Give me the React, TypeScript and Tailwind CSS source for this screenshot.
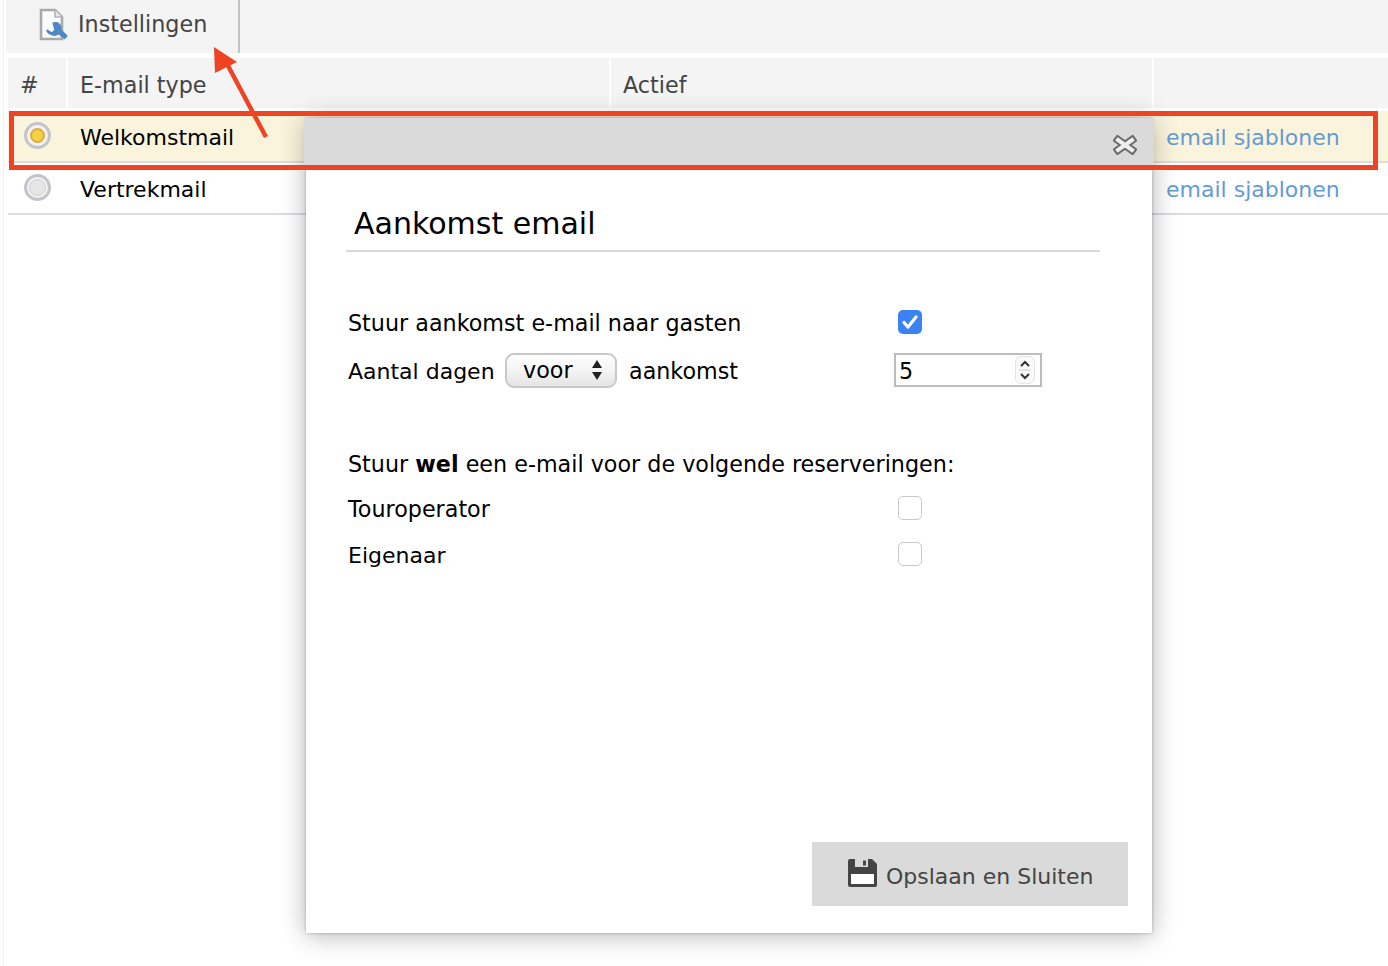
function Radio({ active }: { active?: boolean }) {
  return (
    <span className="flex h-[27px] w-[27px] items-center justify-center rounded-full border-[3px] border-[#c3c5cb] bg-[#f3f3f3]">
      <span className={active ? 'h-[15px] w-[15px] rounded-full border-2 border-[#e0a84a] bg-[#f5d33f]' : 'h-[17px] w-[17px] rounded-full border border-[#cfcfcf] bg-[#e6e6e6]'} />
    </span>
  );
}

function Row({ name, active }: { name: string; active?: boolean }) {
  return (
    <div className={`flex h-[52px] border-b-2 border-[#dcdce2] text-[22px] ${active ? 'bg-[#fbf4dc]' : 'bg-white'}`}>
      <div className="flex w-[60px] items-center pb-[2px] pl-[16px]">
        <Radio active={active} />
      </div>
      <div className="flex w-[1086px] items-center pt-[2px] pl-[12px] text-black">{name}</div>
      <div className="flex flex-1 items-center pt-[2px] pl-[12px] text-[#659ad2]">email sjablonen</div>
    </div>
  );
}

function EmptyCheck() {
  return <span className="block h-[24px] w-[24px] rounded-[5px] border border-[#c9c9c9] bg-white" />;
}

export default function App() {
  return (
    <div className="relative h-[966px] w-[1388px] overflow-hidden bg-white font-['DejaVu_Sans',sans-serif] text-[22.25px] text-[#444]">
      <div className="ml-[3px] h-[966px] border-l border-[#f1f1f1] pl-[2px]">
        <div className="flex h-[53px] bg-[#f4f4f4] pl-[33px]">
          <div className="flex w-[201px] items-center gap-[10px] border-r-2 border-[#c4c4c4] pb-[4px]">
            <svg width="29" height="34" viewBox="0 0 29 34" className="shrink-0 overflow-visible">
              <path d="M2 2h14l7 7v22H2z" fill="#fbfbfb" stroke="#a9a9a9" strokeWidth="2.600" />
              <path d="M16 2v7h7" fill="#e8e8e8" stroke="#b5b5b5" strokeWidth="1.600" />
              <path d="M8 22l5 3 3-3-2-7c3-1 6 0 7 2s1 3 1 5l6 6-2.500 2.500-6-5c-2 2-5 2-7 1s-5-2-4.500-4.500z" fill="#4f86c6" stroke="#4f86c6" strokeWidth="1.200" strokeLinejoin="round" />
            </svg>
            <span>Instellingen</span>
          </div>
        </div>
        <div className="ml-[2px] mt-[5px] flex h-[50px] gap-[2px]">
          <div className="flex w-[58px] items-center bg-[#f4f4f4] pl-[12px] pt-[6px]">#</div>
          <div className="flex w-[541px] items-center bg-[#f4f4f4] pl-[12px] pt-[6px]">E-mail type</div>
          <div className="flex w-[541px] items-center bg-[#f4f4f4] pl-[12px] pt-[6px]">Actief</div>
          <div className="flex-1 bg-[#f4f4f4]" />
        </div>
        <div className="ml-[2px] mt-[3px]">
          <Row name="Welkomstmail" active />
          <Row name="Vertrekmail" />
        </div>
      </div>

      <div className="absolute left-[306px] top-[118px] flex h-[815px] w-[846px] flex-col bg-white text-black shadow-[0_2px_24px_rgba(0,0,0,0.3),0_0_3px_rgba(0,0,0,0.25)]">
        <div className="-mx-[2px] flex h-[47px] items-center justify-end bg-[#dadada] pr-[17px] pt-[6px]">
          <svg width="24" height="20" viewBox="0 0 24 20">
            <path d="M5 5l14 10M19 5L5 15" stroke="#6a6a6a" strokeWidth="8" strokeLinecap="square" />
            <path d="M5 5l14 10M19 5L5 15" stroke="#efefef" strokeWidth="4" strokeLinecap="square" />
          </svg>
        </div>
        <div className="flex flex-1 flex-col pl-[40px] pr-[24px]">
          <div className="mr-[28px] mt-[37px] h-[50px] border-b-2 border-[#d8d8d8] pl-[8px] text-[30px] leading-[44px]">
            Aankomst email
          </div>
          <div className="mt-[55px] flex h-[32px] items-center pl-[2px]">
            <span className="w-[550px] pt-[2px]">Stuur aankomst e-mail naar gasten</span>
            <span className="-mt-[2px] flex h-[24px] w-[24px] items-center justify-center rounded-[5px] bg-[#3b82f6]">
              <svg width="18" height="16" viewBox="0 0 18 16">
                <path d="M3 8.500l4 4.500 8-10" fill="none" stroke="white" strokeWidth="3.200" strokeLinecap="round" strokeLinejoin="round" />
              </svg>
            </span>
          </div>
          <div className="mt-[15px] flex h-[34px] items-center pl-[2px]">
            <span className="w-[145px] whitespace-nowrap text-[22px]">Aantal dagen</span>
            <span className="-mt-[2px] ml-[12px] flex h-[35px] w-[112px] items-center justify-between rounded-[9px] border-2 border-[#c8c8c8] bg-gradient-to-b from-[#ffffff] via-[#f4f4f4] to-[#e4e4e4] pl-[16px] pr-[12px]">
              <span className="pt-[2px]">voor</span>
              <svg width="12" height="24" viewBox="0 0 12 24">
                <path d="M6 2l5 8H1zM6 22l-5-8h10z" fill="#222" />
              </svg>
            </span>
            <span className="ml-[12px] w-[265px] pt-[2px]">aankomst</span>
            <span className="-mt-[2px] flex h-[34px] w-[148px] items-center justify-between border-2 border-[#bdbdbd] pl-[3px] pr-[5px]">
              <span className="pt-[4px]">5</span>
              <span className="flex h-[28px] w-[20px] flex-col items-center justify-center rounded-[6px] border border-[#e4e4e4] bg-[#fafafa]">
                <svg width="12" height="26" viewBox="0 0 12 26">
                  <path d="M2 9l4-4 4 4M2 17l4 4 4-4" fill="none" stroke="#333" strokeWidth="2" />
                  <path d="M0 13h12" stroke="#ccc" />
                </svg>
              </span>
            </span>
          </div>
          <div className="mt-[60px] flex h-[32px] items-center pl-[2px]">
            <span className="whitespace-pre pt-[2px]">Stuur <b>wel</b> een e-mail voor de volgende reserveringen:</span>
          </div>
          <div className="mt-[13px] flex h-[32px] items-center pl-[2px]">
            <span className="w-[550px] pt-[2px]">Touroperator</span>
            <span className="-mt-[2px]"><EmptyCheck /></span>
          </div>
          <div className="mt-[14px] flex h-[32px] items-center pl-[2px]">
            <span className="w-[550px] text-[22px]">Eigenaar</span>
            <span className="-mt-[2px]"><EmptyCheck /></span>
          </div>
          <div className="mt-auto mb-[27px] flex h-[64px] w-[316px] items-center gap-[9px] self-end bg-[#dadada] pl-[36px] text-[22px] text-[#444]">
            <svg width="29" height="28" viewBox="0 0 29 28" className="-mt-[2px] shrink-0">
              <path d="M0 2Q0 0 2 0H24L29 5V26Q29 28 27 28H2Q0 28 0 26Z" fill="#444" />
              <rect x="7" y="0" width="13" height="8" fill="#dadada" />
              <rect x="15" y="1.500" width="3" height="5" fill="#444" />
              <rect x="3" y="15" width="23" height="10" fill="white" />
            </svg>
            <span className="pt-[4px]">Opslaan en Sluiten</span>
          </div>
        </div>
      </div>

      <div className="absolute left-[9px] top-[111px] h-[59px] w-[1369px] border-[5px] border-[#ee4423]" />
      <svg className="absolute left-[205px] top-[45px]" width="70" height="100" viewBox="0 0 70 100">
        <path d="M61 92L21 17" stroke="#ee4423" strokeWidth="4.500" fill="none" />
        <path d="M9 2l23 15-22 11z" fill="#ee4423" />
      </svg>
    </div>
  );
}
